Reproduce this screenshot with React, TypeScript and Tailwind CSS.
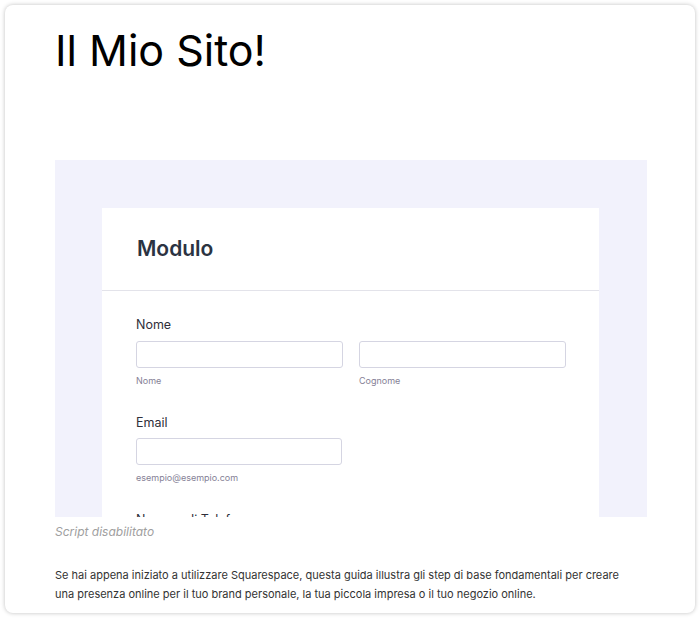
import React from "react";

const poppins = { fontFamily: "Inter, 'Noto Sans', sans-serif" };

function Field({ label, hint, width = "w-[207px]" }: { label?: string; hint: string; width?: string }) {
    return (
        <div className="flex flex-col">
            <input
                type="text"
                className={`h-[27px] ${width} rounded-[3px] border border-[#d5d5e2] bg-white outline-none`}
                aria-label={label ?? hint}
            />
            <span className="mt-[8px] text-[9px] leading-none text-[#857f96]">{hint}</span>
        </div>
    );
}

export default function App() {
    return (
        <div className="min-h-[620px] bg-white p-[5px] font-['Inter',sans-serif]">
            <div className="h-[608px] rounded-lg bg-white pl-[50px] pr-[48px] pt-[23px] shadow-[0_0_4px_rgba(0,0,0,0.25)]">
                {/* titolo */}
                <h1 className="text-[43px] font-normal leading-[44px] text-black" style={poppins}>
                    Il Mio Sito!
                </h1>

                {/* modulo incorporato */}
                <div className="mt-[88px] h-[357px] overflow-hidden bg-[#f2f2fc] pl-[47px] pr-[48px] pt-[48px]">
                    <div className="bg-white">
                        <div className="flex h-[83px] items-center border-b border-[#e3e3ea] px-[35px]">
                            <h2 className="text-[21px] font-semibold text-[#2b3342]">Modulo</h2>
                        </div>
                        <div className="px-[34px] pt-[28px] pb-10">
                            <div className="text-[12.5px] leading-none text-[#2f2f3a]">Nome</div>
                            <div className="mt-[9px] flex gap-[16px]">
                                <Field hint="Nome" />
                                <Field hint="Cognome" />
                            </div>

                            <div className="mt-[32px] text-[12.5px] leading-none text-[#2f2f3a]">Email</div>
                            <div className="mt-[9px]">
                                <Field hint="esempio@esempio.com" width="w-[206px]" />
                            </div>

                            <div className="mt-[32px] text-[12.5px] leading-none text-[#2f2f3a]">Numero di Telefono</div>
                            <div className="mt-[9px]">
                                <Field hint="" width="w-[206px]" />
                            </div>
                        </div>
                    </div>
                </div>

                <p className="mt-[9px] text-[12px] italic leading-none text-[#a0a0a0]" style={poppins}>
                    Script disabilitato
                </p>

                <div className="mt-[28px] text-[11px] leading-[19px] text-[#333333]" style={poppins}>
                    <p className="whitespace-nowrap">
                        Se hai appena iniziato a utilizzare Squarespace, questa guida illustra gli step di base fondamentali per creare
                    </p>
                    <p className="whitespace-nowrap">
                        una presenza online per il tuo brand personale, la tua piccola impresa o il tuo negozio online.
                    </p>
                </div>
            </div>
        </div>
    );
}
